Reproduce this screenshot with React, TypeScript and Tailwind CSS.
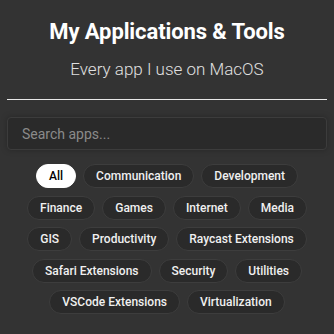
import React, { useState } from 'react';

const CATEGORIES = [
    'All',
    'Communication',
    'Development',
    'Finance',
    'Games',
    'Internet',
    'Media',
    'GIS',
    'Productivity',
    'Raycast Extensions',
    'Safari Extensions',
    'Security',
    'Utilities',
    'VSCode Extensions',
    'Virtualization',
];

export default function App() {
    const [active, setActive] = useState('All');
    const [query, setQuery] = useState('');

    return (
        <div className="min-h-screen bg-[#333333] font-['Roboto',sans-serif] text-white px-[7px]">
            {/* Header */}
            <header className="text-center pt-[18px]">
                <h1 className="text-[22px] font-bold leading-[28px] tracking-[-0.1px]">My Applications &amp; Tools</h1>
                <p className="mt-[13px] text-[17px] font-light leading-[20px] text-[#e0e0e0]">Every app I use on MacOS</p>
            </header>

            <hr className="mt-[20px] border-0 h-px bg-[#e8e8e8]" />

            {/* Search */}
            <div className="mt-[17px]">
                <input
                    type="text"
                    value={query}
                    onChange={e => setQuery(e.target.value)}
                    placeholder="Search apps..."
                    className="w-full h-[33px] px-[14px] rounded-[4px] bg-[#2a2a2a] border border-[#3c3c3c] text-[14px] text-white placeholder:text-[#8a8a8a] outline-none shadow-[0_0_6px_rgba(0,0,0,0.25)]"
                />
            </div>

            {/* Category filters */}
            <div className="mt-[14px] flex flex-wrap justify-center gap-x-[7px] gap-y-[7.5px] px-[1px]">
                {CATEGORIES.map(cat => (
                    <button
                        key={cat}
                        onClick={() => setActive(cat)}
                        className={`h-[24px] px-[12px] rounded-full border text-[12px] font-medium leading-none ${
                            active === cat
                                ? 'bg-white border-white text-black'
                                : 'bg-[#2a2a2a] border-[#3d3d3d] text-[#f0f0f0]'
                        }`}
                    >
                        {cat}
                    </button>
                ))}
            </div>
        </div>
    );
}
